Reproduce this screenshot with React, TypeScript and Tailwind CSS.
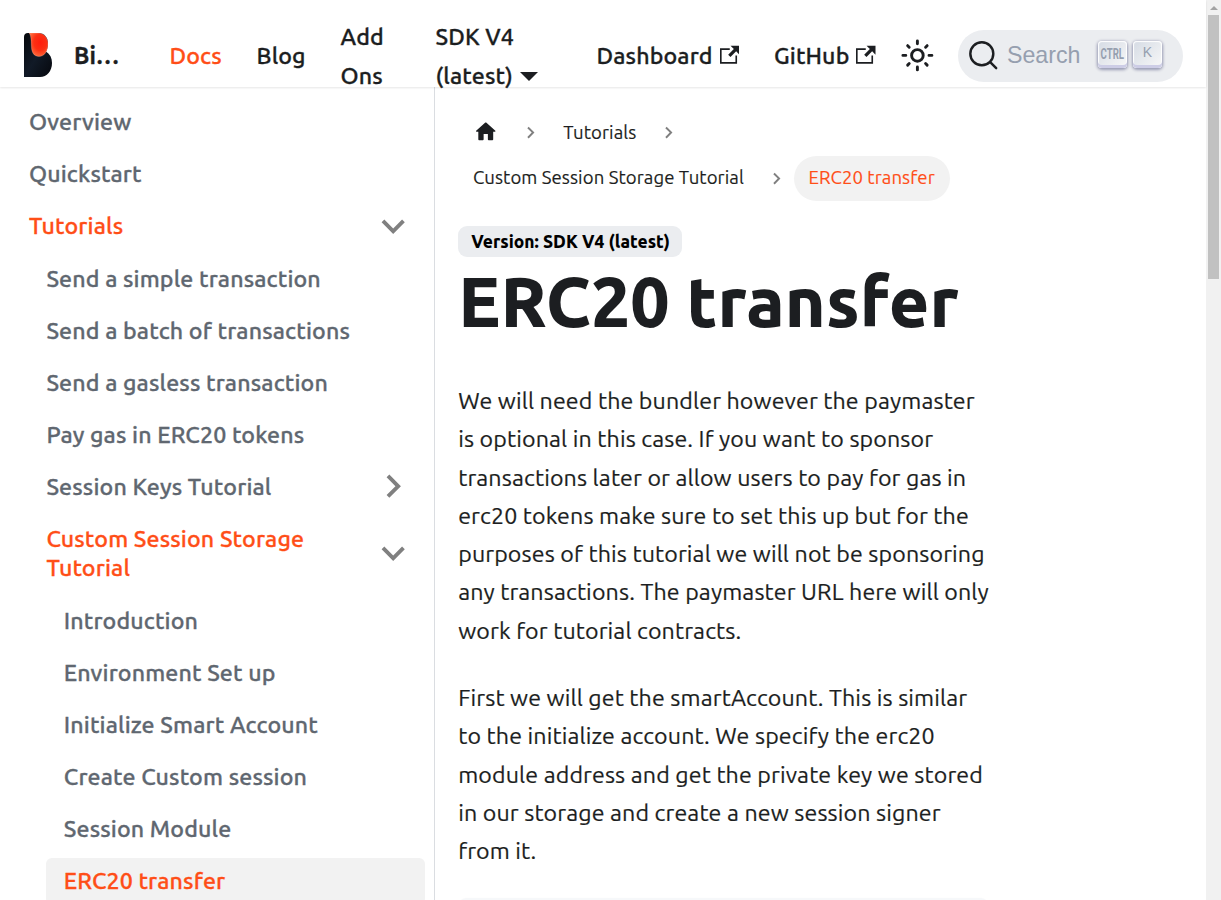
import React from 'react';

function ExternalIcon() {
  return (
    <svg viewBox="0 0 24 24" className="mb-px ml-[7px] h-[19.5px] w-[19.5px] shrink-0 fill-current">
      <path d="M21 13v10h-21v-19h12v2h-10v15h17v-8h2zm3-12h-10.988l4.035 4-6.977 7.07 2.828 2.828 6.977-7.07 4.125 4.172v-11z" />
    </svg>
  );
}

function Chevron({ className }: { className: string }) {
  return (
    <svg viewBox="0 0 24 24" className={className}>
      <path fill="#808080" d="M7.41 15.41L12 10.83l4.59 4.58L18 14l-6-6-6 6z" />
    </svg>
  );
}

function Logo() {
  return (
    <svg viewBox="0 0 28 44" className="mb-[2px] h-11 w-7 shrink-0">
      <defs>
        <linearGradient id="body" x1="0" y1="0" x2="1" y2="1">
          <stop offset="0" stopColor="#05070b" />
          <stop offset=".5" stopColor="#111a27" />
          <stop offset="1" stopColor="#06080d" />
        </linearGradient>
        <radialGradient id="flame" cx=".6" cy=".4" r=".62">
          <stop offset="0" stopColor="#ff1d0c" />
          <stop offset=".55" stopColor="#fb3013" />
          <stop offset="1" stopColor="#ff6a3c" />
        </radialGradient>
      </defs>
      <path fill="url(#body)" d="M0 4Q0 0 4 0H14C21 0 24 5 24 10C24 14 23 17 22 18.500C26 21 28 25 28 30C28 38 23 44 16 44H0Z" />
      <path fill="url(#flame)" stroke="#fff" strokeOpacity=".35" strokeWidth=".5" d="M5 0H14C20.500 0 24 5 24 11C24 18 20.500 23.500 15 23.500C10 23.500 7.500 19.500 7.300 13C7.100 7 7 2 5 0Z" />
    </svg>
  );
}

function Sun() {
  return (
    <svg viewBox="0 0 24 24" className="h-[34.8px] w-[34.8px]" fill="none" stroke="currentColor" strokeWidth="2" strokeLinecap="round">
      <circle cx="12" cy="12" r="4" />
      <path d="M2 12h2M20 12h2M12 2v2M12 20v2M5.280 5.280l1.070 1.070M17.650 17.650l1.070 1.070M5.280 18.720l1.070-1.070M17.650 6.350l1.070-1.070" />
    </svg>
  );
}

function Navbar() {
  return (
    <nav className="relative z-10 flex h-[87px] shrink-0 items-center bg-white pr-[23px] pl-6 pt-[24px] pb-0 shadow-[0_1px_2px_0_rgba(0,0,0,0.1)]">
      <div className="flex h-[62px] w-full items-center text-[23.2px] leading-[38.6px] font-medium tracking-[0.13px] whitespace-nowrap [-webkit-text-stroke:0.3px_currentColor]">
        <div className="flex w-[145.500px] shrink-0 items-center gap-[22px]">
          <Logo />
          <b className="font-bold">Bi…</b>
        </div>
        <a className="w-[87px] shrink-0 text-[#ff4e17]">Docs</a>
        <a className="w-[84px] shrink-0">Blog</a>
        <a className="w-[95px] shrink-0">Add<br />Ons</a>
        <a className="w-[161px] shrink-0">
          SDK V4<br />
          <span className="flex items-center">(latest)<span className="mt-[4px] ml-[7px] border-x-[9px] border-t-[9px] border-x-transparent border-t-[#1c1e21]" /></span>
        </a>
        <a className="flex w-[177.500px] shrink-0 items-center">Dashboard<ExternalIcon /></a>
        <a className="flex w-[126px] shrink-0 items-center">GitHub<ExternalIcon /></a>
        <Sun />
        <button className="mt-px ml-auto flex h-[52px] w-[225px] shrink-0 items-center rounded-full bg-[#ebedf0] pl-[10px] font-['Liberation_Sans',sans-serif] font-normal tracking-normal [-webkit-text-stroke:0]">
          <svg viewBox="0 0 20 20" className="mb-px h-[30.5px] w-[30.5px]" fill="none" stroke="currentColor" strokeWidth="1.6">
            <path strokeLinecap="round" strokeLinejoin="round" d="M14.386 14.386l4.088 4.088-4.088-4.088c-2.942 2.942-7.711 2.942-10.653 0-2.942-2.942-2.942-7.712 0-10.653 2.942-2.942 7.711-2.942 10.653 0 2.942 2.942 2.942 7.711 0 10.653z" />
          </svg>
          <span className="mb-px ml-[8.500px] w-[91px] text-left text-[23.2px] text-[#969faf]">Search</span>
          <kbd className="mr-[6px] mb-[3px] flex h-[27px] w-[29px] items-center justify-center rounded-[4px] bg-[linear-gradient(-225deg,#d5dbe4,#f8f8f8)] shadow-[inset_0_-3px_0_0_#cdcde6,inset_0_0_1px_1px_#fff,0_1px_3px_1px_rgba(30,35,90,0.4)]">
            <span className="inline-block scale-x-[0.64] font-['Roboto',sans-serif] text-[15px] leading-none font-bold text-[#969faf]">CTRL</span>
          </kbd>
          <kbd className="mb-[3px] flex h-[27px] w-[29px] items-center justify-center rounded-[4px] bg-[linear-gradient(-225deg,#d5dbe4,#f8f8f8)] pb-[5px] font-['Liberation_Sans',sans-serif] text-[14px] leading-none text-[#969faf] shadow-[inset_0_-3px_0_0_#cdcde6,inset_0_0_1px_1px_#fff,0_1px_3px_1px_rgba(30,35,90,0.4)]">K</kbd>
        </button>
      </div>
    </nav>
  );
}

type Item = { label: string; depth: 0 | 1 | 2; orange?: boolean; active?: boolean; arrow?: 'down' | 'right' };

const items: Item[] = [
  { label: 'Overview', depth: 0 },
  { label: 'Quickstart', depth: 0 },
  { label: 'Tutorials', depth: 0, orange: true, arrow: 'down' },
  { label: 'Send a simple transaction', depth: 1 },
  { label: 'Send a batch of transactions', depth: 1 },
  { label: 'Send a gasless transaction', depth: 1 },
  { label: 'Pay gas in ERC20 tokens', depth: 1 },
  { label: 'Session Keys Tutorial', depth: 1, arrow: 'right' },
  { label: 'Custom Session Storage\nTutorial', depth: 1, orange: true, arrow: 'down' },
  { label: 'Introduction', depth: 2 },
  { label: 'Environment Set up', depth: 2 },
  { label: 'Initialize Smart Account', depth: 2 },
  { label: 'Create Custom session', depth: 2 },
  { label: 'Session Module', depth: 2 },
  { label: 'ERC20 transfer', depth: 2, orange: true, active: true },
];

const indent = { 0: 'ml-0', 1: 'ml-[17.4px]', 2: 'ml-[34.8px]' };

function Sidebar() {
  return (
    <aside className="w-[435px] shrink-0 overflow-hidden border-r border-[#dadde1] pt-[11.3px] pr-[9px] pl-[11.6px]">
      <ul className="flex flex-col gap-[5.8px]">
        {items.map((it) => (
          <li
            key={it.label}
            className={`flex shrink-0 items-center justify-between rounded-[5.8px] py-[8.7px] pr-[8.5px] pl-[17.4px] text-[23.2px] leading-[29px] font-medium tracking-[0.13px] whitespace-pre [-webkit-text-stroke:0.3px_currentColor] ${indent[it.depth]} ${it.orange ? 'text-[#ff4e17]' : 'text-[#606770]'} ${it.active ? 'bg-[#f2f2f2]' : ''}`}
          >
            {it.label}
            {it.arrow && <Chevron className={`-my-[9px] h-[46.4px] w-[46.4px] shrink-0 ${it.arrow === 'down' ? 'rotate-180' : 'rotate-90'}`} />}
          </li>
        ))}
      </ul>
    </aside>
  );
}

const first = [
  'We will need the bundler however the paymaster',
  'is optional in this case. If you want to sponsor',
  'transactions later or allow users to pay for gas in',
  'erc20 tokens make sure to set this up but for the',
  'purposes of this tutorial we will not be sponsoring',
  'any transactions. The paymaster URL here will only',
  'work for tutorial contracts.',
];
const second = [
  'First we will get the smartAccount. This is similar',
  'to the initialize account. We specify the erc20',
  'module address and get the private key we stored',
  'in our storage and create a new session signer',
  'from it.',
];

function Article() {
  return (
    <main className="flex min-w-0 flex-1 flex-col items-start overflow-hidden pt-[23.2px] pl-[23.200px]">
      <div className="text-[18.56px] leading-[30.6px] tracking-[0.08px] whitespace-nowrap [-webkit-text-stroke:0.15px_currentColor]">
        <div className="flex h-[45.400px] items-center">
          <svg viewBox="0 0 24 24" className="mb-[2px] ml-[14.800px] h-[25.500px] w-[25.500px] fill-current">
            <path d="M10 19v-5h4v5c0 .55.45 1 1 1h3c.55 0 1-.45 1-1v-7h1.700c.46 0 .68-.57.33-.87L12.670 3.600c-.38-.34-.96-.34-1.340 0l-8.360 7.530c-.34.3-.13.87.33.87H5v7c0 .55.45 1 1 1h3c.55 0 1-.45 1-1z" />
          </svg>
          <Chevron className="ml-[21px] h-[23.200px] w-[23.200px] rotate-90" />
          <span className="ml-[20.500px] w-[74px]">Tutorials</span>
          <Chevron className="ml-[20px] h-[23.200px] w-[23.200px] rotate-90" />
        </div>
        <div className="flex h-[45.400px] items-center">
          <span className="ml-[14.800px] w-[272px]">Custom Session Storage Tutorial</span>
          <Chevron className="ml-[20.500px] h-[23.200px] w-[23.200px] rotate-90" />
          <span className="ml-[5px] flex h-[45px] w-[156px] items-center rounded-full bg-[#f2f2f2] pl-[14.800px] text-[#ff4e17]">ERC20 transfer</span>
        </div>
      </div>
      <span className="mt-[25.500px] w-[224px] rounded-[9px] bg-[#ebedf0] px-[13px] py-[5.800px] text-[17.400px] leading-[19.400px] font-[760] whitespace-nowrap text-black">Version: SDK V4 (latest)</span>
      <h1 className="mt-px text-[69.600px] leading-[87px] font-[760] tracking-[0.1px] whitespace-nowrap">ERC20 transfer</h1>
      <p className="mt-[35.600px] text-[23.200px] leading-[38.280px] tracking-[0.13px] whitespace-pre [-webkit-text-stroke:0.2px_currentColor]">{first.join('\n')}</p>
      <p className="mt-[29px] text-[23.200px] leading-[38.280px] tracking-[0.13px] whitespace-pre [-webkit-text-stroke:0.2px_currentColor]">{second.join('\n')}</p>
      <div className="mt-[29px] h-10 w-[531px] shrink-0 rounded-[9px] bg-[#f6f8fa] shadow-[0_1px_2px_0_rgba(0,0,0,0.1)]" />
    </main>
  );
}

export default function App() {
  return (
    <div className="flex h-[900px] w-[1221px] overflow-hidden bg-white font-['Ubuntu','Noto_Sans',sans-serif] text-[#1c1e21]">
      <div className="flex min-w-0 flex-1 flex-col">
        <Navbar />
        <div className="flex min-h-0 flex-1">
          <Sidebar />
          <Article />
        </div>
      </div>
      <div className="flex w-[15px] shrink-0 flex-col items-center bg-[#f1f1f1]">
        <div className="flex h-[15px] items-center justify-center">
          <span className="border-x-[4px] border-b-[4px] border-x-transparent border-b-[#a3a3a3]" />
        </div>
        <div className="h-[264px] w-[11px] bg-[#c1c1c1]" />
      </div>
    </div>
  );
}
